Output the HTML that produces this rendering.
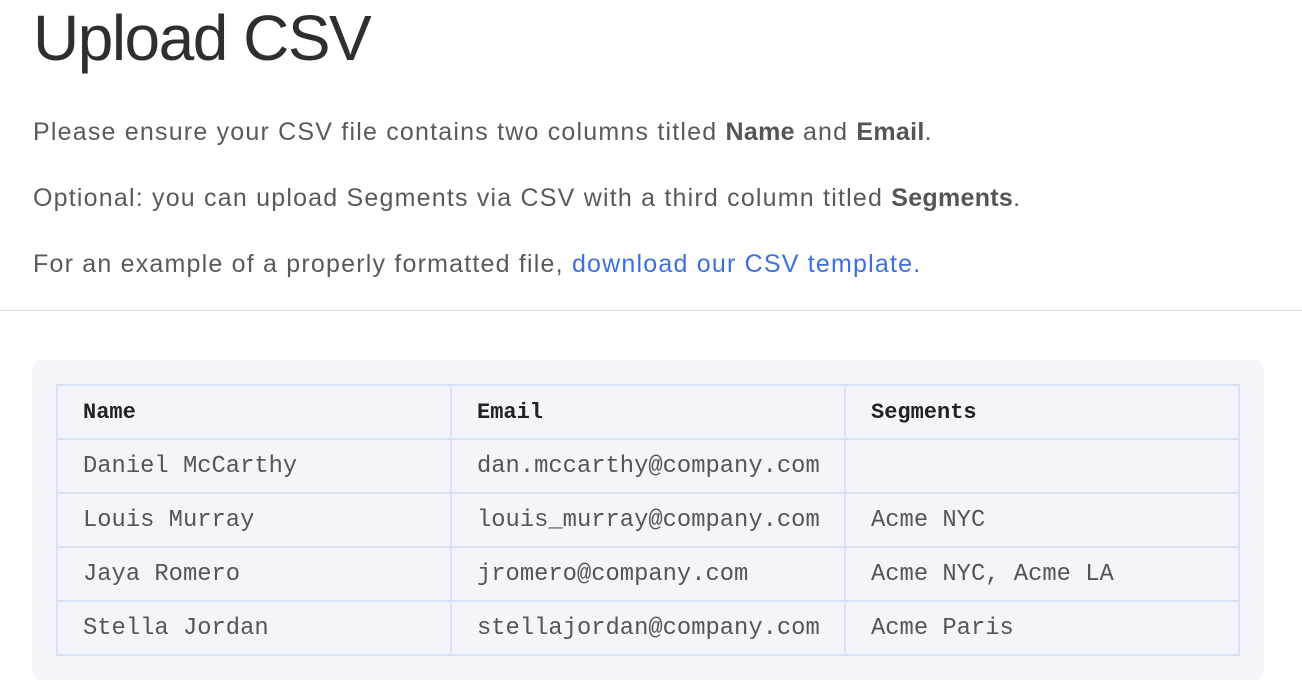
<!DOCTYPE html>
<html><head><meta charset="utf-8"><style>
html,body{margin:0;padding:0;background:#fff;width:1302px;height:700px;overflow:hidden}
body{font-family:"Liberation Sans",sans-serif;color:#555}
h1{position:absolute;left:33px;top:0;margin:0;font-weight:400;font-size:64px;line-height:76px;color:#2f2f31;letter-spacing:-1.5px}
p{position:absolute;left:33px;margin:0;font-size:25px;line-height:30px;color:#5a5a5c;letter-spacing:1.2px;white-space:nowrap}
b{font-weight:700;color:#555;letter-spacing:0.3px}
a{color:#3d6fe0;text-decoration:none}
.hr{position:absolute;left:0;top:310px;width:1302px;height:1px;background:#dcdcdc}
.box{position:absolute;left:32px;top:360px;width:1232px;height:320px;background:#f4f4fa;border-radius:10px}
table{position:absolute;left:56px;top:384px;border-collapse:collapse;table-layout:fixed;width:1184px;font-family:"Liberation Mono",monospace;font-size:23.8px;color:#555}
td{border:2px solid #d8e3f7;height:52px;padding:0 0 0 25px;box-sizing:border-box;white-space:nowrap}
tr{height:54px}
tr.h td{font-weight:700;color:#222;font-size:22px}
</style></head><body>
<h1>Upload CSV</h1>
<p style="top:117px">Please ensure your CSV file contains two columns titled <b>Name</b> and <b>Email</b>.</p>
<p style="top:183px">Optional: you can upload Segments via CSV with a third column titled <b>Segments</b>.</p>
<p style="top:249px">For an example of a properly formatted file, <a>download our CSV template.</a></p>
<div class="hr"></div>
<div class="box"></div>
<table>
<colgroup><col style="width:394px"><col style="width:394px"><col style="width:394px"></colgroup>
<tr class="h"><td>Name</td><td>Email</td><td>Segments</td></tr>
<tr><td>Daniel McCarthy</td><td>dan.mccarthy@company.com</td><td></td></tr>
<tr><td>Louis Murray</td><td>louis_murray@company.com</td><td>Acme NYC</td></tr>
<tr><td>Jaya Romero</td><td>jromero@company.com</td><td>Acme NYC, Acme LA</td></tr>
<tr><td>Stella Jordan</td><td>stellajordan@company.com</td><td>Acme Paris</td></tr>
</table>
</body></html>
